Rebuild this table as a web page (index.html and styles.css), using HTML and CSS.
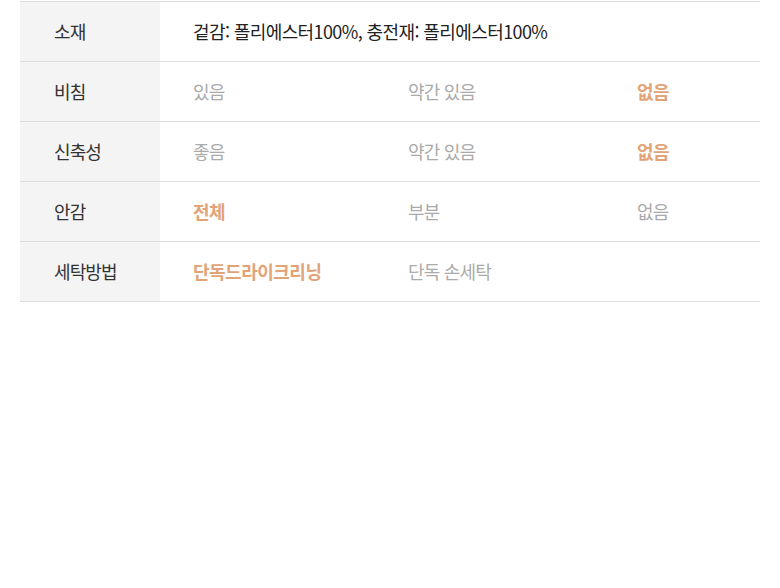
FILE: index.html
```html
<!DOCTYPE html>
<html lang="ko">
<head>
<meta charset="utf-8">
<link rel="stylesheet" href="styles.css">
</head>
<body>
<table class="spec">
  <colgroup>
    <col class="col-head">
    <col class="col-1">
    <col class="col-2">
    <col class="col-3">
  </colgroup>
  <tr>
    <th>소재</th>
    <td colspan="3" class="dark">겉감: 폴리에스터100%, 충전재: 폴리에스터100%</td>
  </tr>
  <tr>
    <th>비침</th>
    <td>있음</td>
    <td>약간 있음</td>
    <td class="on">없음</td>
  </tr>
  <tr>
    <th>신축성</th>
    <td>좋음</td>
    <td>약간 있음</td>
    <td class="on">없음</td>
  </tr>
  <tr>
    <th>안감</th>
    <td class="on">전체</td>
    <td>부분</td>
    <td>없음</td>
  </tr>
  <tr>
    <th>세탁방법</th>
    <td class="on">단독드라이크리닝</td>
    <td>단독 손세탁</td>
    <td></td>
  </tr>
</table>
</body>
</html>
```
FILE: styles.css
```css
html, body {
  margin: 0;
  padding: 0;
  background: #fff;
}
body {
  padding: 1px 20px 0 20px;
  font-family: "Noto Sans CJK KR", "Noto Sans", sans-serif;
}
.spec {
  width: 740px;
  border-collapse: collapse;
  table-layout: fixed;
  border-top: 1px solid #dddddd;
}
.col-head { width: 140px; }
.col-1 { width: 215px; }
.col-2 { width: 229px; }
.col-3 { width: 156px; }
.spec tr {
  height: 60px;
  border-bottom: 1px solid #dddddd;
}
.spec th {
  background: #f4f4f4;
  text-align: left;
  font-weight: 400;
  color: #333;
  padding: 0 0 2px 34px;
  font-size: 18px;
  letter-spacing: -0.9px;
}
.spec td {
  padding: 0 0 2px 33px;
  font-size: 18px;
  letter-spacing: -0.8px;
  color: #aaaaaa;
  vertical-align: middle;
  white-space: nowrap;
}
.spec td.dark { color: #222; letter-spacing: -0.6px; }
.spec td.on { color: #e2a377; font-weight: 700; letter-spacing: -0.5px; }
```
